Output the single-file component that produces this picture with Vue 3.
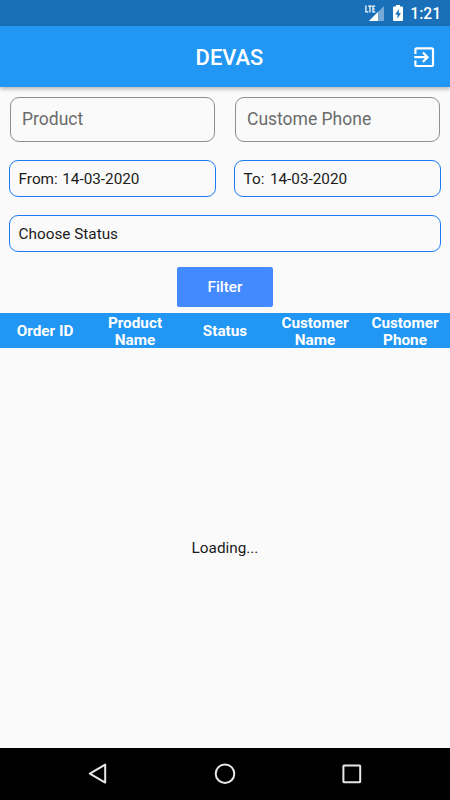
<script setup>
const columns = [['Order ID'], ['Product', 'Name'], ['Status'], ['Customer', 'Name'], ['Customer', 'Phone']]
const dates = [
  { label: 'From:', value: '14-03-2020' },
  { label: 'To:', value: '14-03-2020' }
]
</script>

<template>
  <div class="screen">
    <div class="status-bar">
      <svg class="signal" width="21" height="20" viewBox="0 0 21 20">
        <path d="M19 1V16H4Z" fill="#76a9d5" />
        <path d="M13 7V16H4Z" fill="#fff" />
        <path d="M0 0H11V8.5H0Z" fill="#1a70b8" />
        <path d="M.9 .6V6.9H3.4M3.2 1.2H6.8M5 1.2V7.5M10.2 1.2H7.9V6.9H10.3M8 4H10" fill="none" stroke="#fff" stroke-width="1.2" />
      </svg>
      <svg class="battery" width="10" height="17" viewBox="0 0 10 17">
        <path d="M3 0H7V1.6H9Q10 1.6 10 2.6V15Q10 16 9 16H1Q0 16 0 15V2.6Q0 1.6 1 1.6H3Z" fill="#fff" />
        <path d="M5.9 4L2.2 9.6H4.5V13.7L7.9 8H5.7Z" fill="#1a70b8" />
      </svg>
      <span class="clock">1:21</span>
    </div>
    <header class="app-bar">
      <h1>DEVAS</h1>
      <svg class="exit" viewBox="0 0 24 24">
        <path fill="#fff" d="M10.09 15.59L11.5 17l5-5-5-5-1.41 1.41L12.67 11H3v2h9.67l-2.58 2.59zM19 3H5c-1.11 0-2 .9-2 2v4h2V5h14v14H5v-4H3v4c0 1.1.89 2 2 2h14c1.1 0 2-.9 2-2V5c0-1.1-.9-2-2-2z" />
      </svg>
    </header>
    <main>
      <div class="row inputs">
        <div class="input">Product</div>
        <div class="input">Custome Phone</div>
      </div>
      <div class="row dates">
        <div v-for="d in dates" :key="d.label" class="picker">
          <span>{{ d.label }}</span><span>{{ d.value }}</span>
        </div>
      </div>
      <div class="row status">
        <div class="picker">Choose Status</div>
      </div>
      <button class="filter">Filter</button>
      <div class="table-head">
        <div v-for="(c, i) in columns" :key="i" class="cell">
          <span v-for="w in c" :key="w">{{ w }}</span>
        </div>
      </div>
      <div class="loading">Loading...</div>
    </main>
    <nav>
      <svg width="20" height="22" viewBox="0 0 20 22"><path d="M17.2 1.6V19.6L1.8 10.6Z" /></svg>
      <svg width="22" height="22" viewBox="0 0 22 22"><circle cx="11" cy="10.7" r="9.3" /></svg>
      <svg width="20" height="22" viewBox="0 0 20 22"><rect x="1.4" y="2.4" width="16.8" height="16.8" rx=".6" /></svg>
    </nav>
  </div>
</template>

<style>
body { background: #fafafa; }
</style>

<style scoped>
* { box-sizing: border-box; }
.screen {
  width: 450px;
  height: 800px;
  display: flex;
  flex-direction: column;
  background: #fafafa;
  color: #1b1b1b;
  font-family: Roboto, sans-serif;
  overflow: hidden;
}
.status-bar {
  height: 26px;
  flex: none;
  display: flex;
  justify-content: flex-end;
  align-items: flex-start;
  padding: 5px 9px 0 0;
  background: #1a70b8;
}
.battery { margin: 0 7.5px 0 7px; }
.clock { color: #fff; font-size: 15.6px; font-weight: 500; line-height: 19px; }
.app-bar {
  height: 61px;
  flex: none;
  display: grid;
  grid-template-columns: 1fr auto 1fr;
  align-items: center;
  padding: 1px 13px 0;
  background: #2196f3;
  box-shadow: 0 2px 4px rgba(0, 0, 0, .28);
  z-index: 1;
}
h1 {
  grid-column: 2;
  margin: 0;
  padding-left: 9px;
  color: #fff;
  font-size: 21.9px;
  font-weight: 500;
}
.exit { width: 26.4px; height: 26.4px; justify-self: end; }
main {
  flex: 1;
  display: flex;
  flex-direction: column;
  padding-top: 10px;
}
.row { display: flex; }
.inputs { gap: 20px; padding: 0 10px; }
.input {
  flex: 1;
  height: 45px;
  border: 1px solid #8f8f8f;
  border-radius: 9px;
  padding-left: 11px;
  font-size: 17.5px;
  line-height: 43px;
  color: #6b6b6b;
}
.dates { gap: 18px; padding: 0 9px; margin-top: 18px; }
.picker {
  flex: 1;
  height: 37px;
  display: flex;
  align-items: center;
  gap: 4.5px;
  border: 1px solid #1a7bf2;
  border-radius: 9px;
  padding-left: 8.6px;
  font-size: 15.3px;
}
.dates .picker:last-child { gap: 5.5px; }
.status { padding: 0 9px; margin-top: 18px; }
.filter {
  align-self: center;
  width: 96px;
  height: 40px;
  margin-top: 15px;
  padding: 0;
  border: 0;
  border-radius: 2px;
  background: #448aff;
  color: #fff;
  font: 500 15.3px/41px Roboto, sans-serif;
}
.table-head {
  height: 35px;
  margin-top: 6px;
  padding-top: 2px;
  display: grid;
  grid-template-columns: repeat(5, 1fr);
  grid-template-rows: 33px;
  background: #2196f3;
  color: #fff;
  font-size: 15.3px;
  font-weight: 700;
  line-height: 17px;
}
.cell {
  display: flex;
  flex-direction: column;
  align-items: center;
  justify-content: center;
}
.loading {
  flex: 1;
  display: flex;
  align-items: center;
  justify-content: center;
  font-size: 15.3px;
}
nav {
  height: 52px;
  flex: none;
  display: flex;
  justify-content: space-between;
  align-items: center;
  padding: 0 88px;
  background: #000;
}
nav svg { fill: none; stroke: #e8e8e8; stroke-width: 2; stroke-linejoin: round; }
</style>
